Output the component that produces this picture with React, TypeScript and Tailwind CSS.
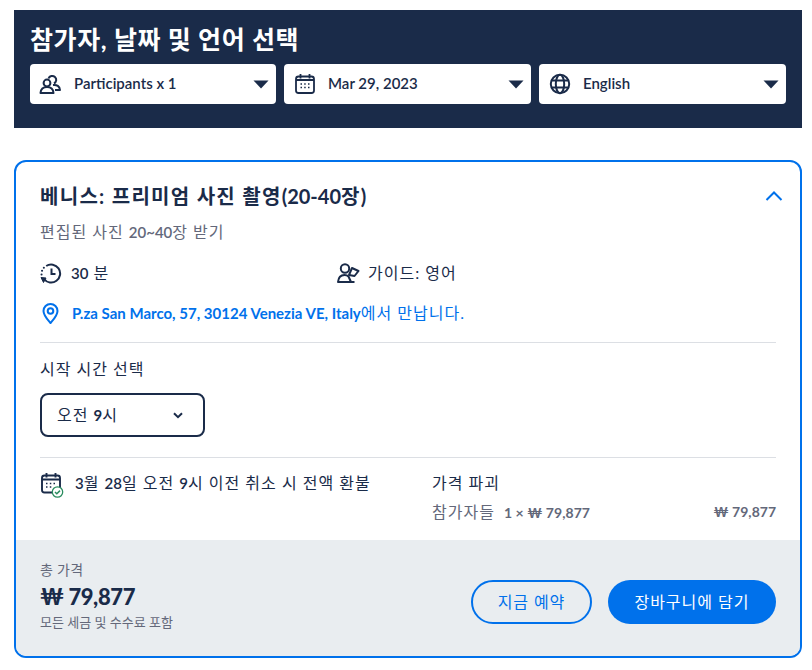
import React from "react";

const font = { fontFamily: '"Lato", "Noto Sans CJK KR", sans-serif' };

function L({ children, className = "" }: { children: React.ReactNode; className?: string }) {
  return <span className={`text-[15px] font-semibold tracking-normal ${className}`}>{children}</span>;
}

function Caret() {
  return (
    <svg width="16" height="9" viewBox="0 0 16 9" className="shrink-0">
      <path d="M0.500 0.500h15L8 8.500z" fill="#1a2b49" />
    </svg>
  );
}

function PeopleIcon() {
  return (
    <svg width="22" height="22" viewBox="0 0 22 22" fill="none" stroke="#1a2b49" strokeWidth="2" className="shrink-0 -translate-x-[1px]">
      <circle cx="8" cy="10" r="3.400" />
      <path d="M9.500 5.500a4 4 0 1 1 5.500 5" />
      <path d="M1.500 20c.3-3.800 3-6 6.500-6s6.200 2.200 6.500 6z" strokeLinejoin="round" />
      <path d="M14 12c3.800-.6 6.800 1.300 7 5h-5" strokeLinejoin="round" />
    </svg>
  );
}

function CalendarIcon() {
  return (
    <svg width="22" height="22" viewBox="0 0 22 22" fill="none" stroke="#1a2b49" strokeWidth="1.800" className="shrink-0">
      <rect x="2" y="3.500" width="18" height="16.500" rx="2.500" />
      <path d="M6.500 1v4.500M15.500 1v4.500M2 7h18" />
      <path d="M6.500 11h1.500M10.200 11h1.500M14 11h1.500M6.500 14.500h1.500M10.200 14.500h1.500M14 14.500h1.500" strokeWidth="1.400" />
    </svg>
  );
}

function GlobeIcon() {
  return (
    <svg width="22" height="22" viewBox="0 0 22 22" fill="none" stroke="#1a2b49" strokeWidth="2" className="shrink-0">
      <circle cx="11" cy="11" r="9.200" />
      <ellipse cx="11" cy="11" rx="4.200" ry="9.200" />
      <path d="M2.500 7.500h17M2.500 14.500h17" />
    </svg>
  );
}

function SelectBox({ icon, label, width }: { icon: React.ReactNode; label: string; width: string }) {
  return (
    <div className={`flex h-10 items-center rounded-[4px] bg-white pl-[10px] pr-[6px] ${width}`}>
      {icon}
      <span className="ml-[12px] flex-1 pb-[2px] text-[15px] font-semibold text-[#1a2b49]">{label}</span>
      <span className="mr-[1px]"><Caret /></span>
    </div>
  );
}

export default function App() {
  return (
    <div className="min-h-[670px] w-[812px] bg-white pl-[14px] pr-[10px] pt-[10px]" style={font}>
      <div className="h-[118px] bg-[#1a2b49] px-4 pt-[14px]">
        <h1 className="h-[30px] text-[25px] font-bold leading-[30px] tracking-[0.6px] text-white">참가자, 날짜 및 언어 선택</h1>
        <div className="mt-[10px] flex gap-2">
          <SelectBox width="w-[246px]" icon={<PeopleIcon />} label="Participants x 1" />
          <SelectBox width="w-[247px]" icon={<CalendarIcon />} label="Mar 29, 2023" />
          <SelectBox width="w-[247px]" icon={<GlobeIcon />} label="English" />
        </div>
      </div>

      <div className="mt-8 h-[498px] overflow-hidden rounded-[12px] border-2 border-[#0071eb] bg-white">
        <div className="h-[378px] px-6 pt-[22px] text-[16px] tracking-[1px]">
          <div className="flex h-[24px] items-center justify-between">
            <h2 className="text-[20px] font-bold leading-6 tracking-[1.3px] text-[#1a2b49]">베니스: 프리미엄 사진 촬영<span className="tracking-normal">(20-40</span>장)</h2>
            <svg width="18" height="10" viewBox="0 0 18 10" fill="none" stroke="#0071eb" strokeWidth="2" className="mr-[-7px]">
              <path d="M1.500 9L9 1.500 16.500 9" />
            </svg>
          </div>
          <p className="mt-[13px] leading-[22px] text-[#63687a]">편집된 사진 <L>20~40</L>장 받기</p>

          <div className="mt-[18px] flex h-[24px] items-center text-[#1a2b49]">
            <div className="flex w-[297px] items-center gap-[9px]">
              <svg width="22" height="22" viewBox="0 0 22 22" fill="none" stroke="#1a2b49" strokeWidth="2" className="shrink-0">
                <path d="M6.200 4A9 9 0 1 1 4 17" />
                <path d="M11.500 6.500V12h4" />
                <path d="M1.500 12.500h.1M2 8.800h.1M3.800 5.800h.1" strokeWidth="2" strokeLinecap="round" />
                <path d="M1 15.500l5 .5-2.500 4.500z" fill="#1a2b49" strokeWidth="1" />
              </svg>
              <span><L>30</L> 분</span>
            </div>
            <div className="flex items-center gap-[8px]">
              <svg width="23" height="22" viewBox="0 0 23 22" fill="none" stroke="#1a2b49" strokeWidth="2" className="shrink-0">
                <circle cx="8" cy="6.500" r="4.200" />
                <path d="M1 20c.4-4.500 3-7 6.500-7 1.500 0 3 .5 4 1.500l2.500 5.500z" strokeLinejoin="round" />
                <path d="M12 13l3-7 6.500 3-4 5z" strokeLinejoin="round" />
                <path d="M14 20h3.500" />
              </svg>
              <span>가이드: 영어</span>
            </div>
          </div>

          <div className="mt-[16px] flex h-[24px] items-center gap-[11px] text-[#0071eb]">
            <svg width="21" height="21" viewBox="0 0 21 21" fill="none" stroke="#0071eb" strokeWidth="2" className="shrink-0">
              <path d="M10.500 20C7 16 3.500 12.500 3.500 8a7 7 0 0 1 14 0c0 4.500-3.500 8-7 12z" strokeLinejoin="round" />
              <circle cx="10.500" cy="8" r="2.800" />
            </svg>
            <span><span className="text-[15px] font-bold tracking-normal">P.za San Marco, 57, 30124 Venezia VE, Italy</span>에서 만납니다.</span>
          </div>

          <div className="mt-[17px] h-px bg-[#dcdfe4]" />

          <p className="mt-[15px] leading-[22px] text-[#1a2b49]">시작 시간 선택</p>

          <div className="mt-[13px] flex h-[44px] w-[165px] items-center justify-between rounded-[8px] border-2 border-[#1a2b49] pl-[15px] pr-[20px] text-[#1a2b49]">
            <span>오전 <span className="text-[15px] font-bold tracking-normal">9</span>시</span>
            <svg width="10" height="7" viewBox="0 0 10 7" fill="none" stroke="#1a2b49" strokeWidth="2">
              <path d="M1 1.200l4 4 4-4" />
            </svg>
          </div>

          <div className="mt-[20px] h-px bg-[#dcdfe4]" />

          <div className="mt-[14px] flex">
            <div className="flex w-[392px] gap-[11px]">
              <svg width="24" height="26" viewBox="0 0 24 26" fill="none" className="shrink-0">
                <rect x="2" y="3.500" width="18" height="17" rx="2.500" stroke="#1a2b49" strokeWidth="1.900" />
                <path d="M6.500 1v4.500M15.500 1v4.500M2 7.500h18" stroke="#1a2b49" strokeWidth="1.900" />
                <path d="M6 11.500h1.500M9.800 11.500h1.500M13.500 11.500H15M6 15h1.500M9.800 15h1.500" stroke="#1a2b49" strokeWidth="1.400" />
                <circle cx="17.500" cy="20" r="5.200" fill="white" stroke="#2a8c5f" strokeWidth="1.300" />
                <path d="M15 20l1.800 1.800 3.200-3.200" stroke="#2a8c5f" strokeWidth="1.500" />
              </svg>
              <span className="leading-[22px] text-[#1a2b49]"><L>3</L>월 <L>28</L>일 오전 <L className="font-bold">9</L>시 이전 취소 시 전액 환불</span>
            </div>
            <div className="flex-1">
              <p className="leading-[22px] text-[#1a2b49]">가격 파괴</p>
              <div className="mt-[7px] flex justify-between leading-[22px] text-[#63687a]">
                <span>참가자들 <span className="ml-[4px] text-[14px] font-bold tracking-[0.05px]">1 × ₩ 79,877</span></span>
                <span className="text-[14px] font-bold tracking-normal">₩ 79,877</span>
              </div>
            </div>
          </div>
        </div>

        <div className="flex h-[116px] items-start justify-between bg-[#e9edf0] px-6 pt-[21px]">
          <div>
            <p className="text-[14px] leading-[18px] tracking-[0.3px] text-[#63687a]">총 가격</p>
            <p className="mt-[3px] text-[22px] font-black leading-[30px] tracking-[-0.4px] text-[#1a2b49]">₩ 79,877</p>
            <p className="mt-[2px] text-[13px] leading-[17px] text-[#63687a]">모든 세금 및 수수료 포함</p>
          </div>
          <div className="mt-[19px] flex gap-4">
            <button className="flex h-11 w-[121px] items-center justify-center rounded-full border-2 border-[#0071eb] text-[16px] tracking-[0.9px] text-[#0071eb]">지금 예약</button>
            <button className="flex h-11 w-[168px] items-center justify-center rounded-full bg-[#0071eb] text-[16px] tracking-[1px] text-white">장바구니에 담기</button>
          </div>
        </div>
      </div>
    </div>
  );
}
